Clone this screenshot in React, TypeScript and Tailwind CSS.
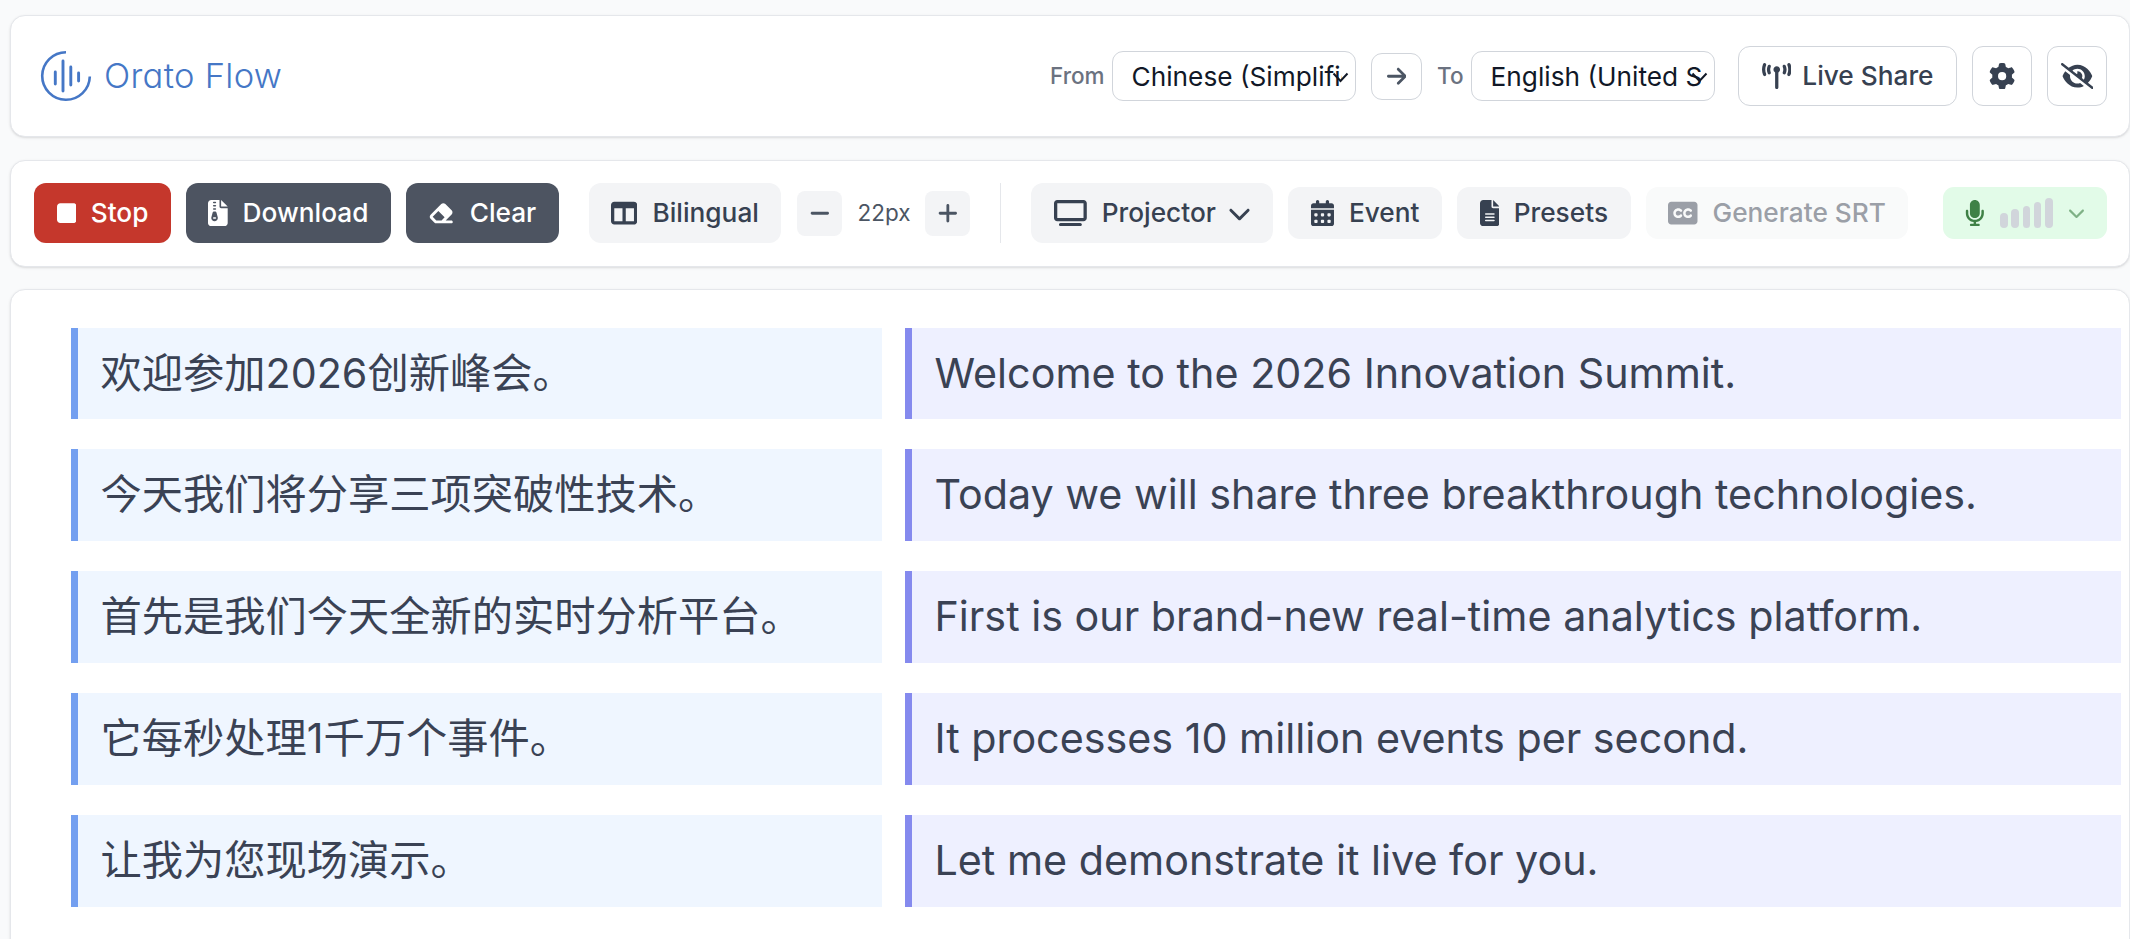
import { ReactNode } from 'react';
import {
  FaArrowRight,
  FaCalendarDays,
  FaChevronDown,
  FaClosedCaptioning,
  FaEraser,
  FaEyeSlash,
  FaFileLines,
  FaFileZipper,
  FaGear,
  FaMicrophone,
  FaMinus,
  FaPlus,
  FaStop,
  FaTableColumns,
  FaTowerBroadcast,
  FaTv,
} from 'react-icons/fa6';
import clsx from 'clsx';

const segments = [
  { source: '欢迎参加2026创新峰会。', target: 'Welcome to the 2026 Innovation Summit.' },
  { source: '今天我们将分享三项突破性技术。', target: 'Today we will share three breakthrough technologies.' },
  { source: '首先是我们今天全新的实时分析平台。', target: 'First is our brand-new real-time analytics platform.' },
  { source: '它每秒处理1千万个事件。', target: 'It processes 10 million events per second.' },
  { source: '让我为您现场演示。', target: 'Let me demonstrate it live for you.' },
];

const levelBars = ['h-[15px]', 'h-[19px]', 'h-[22px]', 'h-[26px]', 'h-[30px]'];

function Logo() {
  return (
    <div className="flex items-center text-[#4577c6]">
      <svg width="52" height="52" viewBox="0 0 52 52" fill="none" stroke="currentColor" strokeWidth="2.6">
        <path d="M26 2.2A23.8 23.8 0 1 0 49.8 26.5" />
        <path d="M15.3 22v12M23 11v30M30.8 17v18M38.6 23v8" strokeLinecap="round" strokeWidth="2.9" />
      </svg>
      <span className="ml-3 text-[34.5px] leading-none font-light tracking-[0.3px] whitespace-nowrap [font-feature-settings:'cv11','ss03']">
        Orato Flow
      </span>
    </div>
  );
}

function LanguageSelect({ value }: { value: string }) {
  return (
    <button className="relative flex h-[50px] w-[244px] items-center rounded-[11px] border border-[#d1d5db] bg-white pt-px pr-[13px] pl-[18.5px] text-[26.25px] text-[#111827]">
      <span className="overflow-hidden whitespace-nowrap">{value}</span>
      <svg className="absolute top-[20px] right-[6px]" width="17" height="12" viewBox="0 0 17 12" fill="none" stroke="currentColor" strokeWidth="2">
        <path d="M1.5 1.5L8.5 9L15.5 1.5" />
      </svg>
    </button>
  );
}

function ToolButton({ icon, label, className, children }: { icon: ReactNode; label: string; className: string; children?: ReactNode }) {
  return (
    <button
      className={clsx(
        'flex shrink-0 items-center rounded-[12px] px-[22.5px] text-[26.25px] font-medium whitespace-nowrap',
        className
      )}
    >
      {icon}
      <span>{label}</span>
      {children}
    </button>
  );
}

function Header() {
  return (
    <header className="flex h-[122px] items-center justify-between rounded-[15px] border border-[#e5e7eb] bg-white pr-[22px] pl-[29px] shadow-sm">
      <Logo />
      <div className="flex items-center">
        <span className="mr-[7.5px] text-[22.5px] font-medium text-[#6b7280]">From</span>
        <LanguageSelect value="Chinese (Simplified)" />
        <button className="mx-[15px] flex h-[47px] w-[51px] items-center justify-center rounded-[11px] border border-[#d1d5db] text-[#4b5563]">
          <FaArrowRight className="h-[22.5px] w-[19.7px]" />
        </button>
        <span className="mr-[7.5px] text-[22.5px] font-medium text-[#6b7280]">To</span>
        <LanguageSelect value="English (United States)" />
        <div className="ml-[23px] flex items-center gap-[15px] text-[#374151]">
          <ToolButton
            icon={<FaTowerBroadcast className="h-[26.25px] w-[29.5px] shrink-0" />}
            label="Live Share"
            className="h-[60px] gap-[11.25px] border border-[#d1d5db]"
          />
          <button className="flex size-[60px] items-center justify-center rounded-[11px] border border-[#d1d5db]">
            <FaGear className="size-[26.25px]" />
          </button>
          <button className="flex size-[60px] items-center justify-center rounded-[11px] border border-[#d1d5db]">
            <FaEyeSlash className="h-[26.25px] w-[32.8px] shrink-0" />
          </button>
        </div>
      </div>
    </header>
  );
}

function MicLevel() {
  return (
    <button className="ml-auto flex h-[52px] items-center gap-[15px] rounded-[11px] bg-[#e2fbe8] px-[22.5px] text-[#3f8146]">
      <FaMicrophone className="h-[26.25px] w-[19.7px] shrink-0" />
      <span className="flex h-[30px] items-end gap-[3.75px]">
        {levelBars.map(height => (
          <span key={height} className={clsx('w-[7.5px] rounded-full bg-[#d1d5db]', height)} />
        ))}
      </span>
      <FaChevronDown className="h-[19.5px] w-[17px] shrink-0 opacity-60" />
    </button>
  );
}

function Toolbar() {
  return (
    <div className="flex h-[107px] items-center rounded-[15px] border border-[#e5e7eb] bg-white pr-[22px] pb-px pl-[23px] shadow-sm">
      <div className="flex gap-[15px] text-white">
        <ToolButton
          icon={<FaStop className="h-[26.25px] w-[19.7px] shrink-0" />}
          label="Stop"
          className="h-[60px] gap-[14.5px] bg-[#c5372c]"
        />
        <ToolButton
          icon={<FaFileZipper className="h-[26.25px] w-[19.7px] shrink-0" />}
          label="Download"
          className="h-[60px] gap-[14.5px] bg-[#4d5461]"
        />
        <ToolButton
          icon={<FaEraser className="h-[26.25px] w-[26.25px] shrink-0" />}
          label="Clear"
          className="h-[60px] gap-[15px] bg-[#4d5461]"
        />
      </div>

      <div className="ml-[30px] flex items-center text-[#374151]">
        <ToolButton
          icon={<FaTableColumns className="size-[26.25px] shrink-0" />}
          label="Bilingual"
          className="h-[60px] gap-[15px] bg-[#f3f4f6]"
        />
        <div className="ml-[16px] flex items-center text-[#4b5563]">
          <button className="flex size-[45px] items-center justify-center rounded-[8px] bg-[#f3f4f6]">
            <FaMinus className="h-[22.5px] w-[19.7px]" />
          </button>
          <span className="w-[83px] text-center text-[22.5px]">22px</span>
          <button className="flex size-[45px] items-center justify-center rounded-[8px] bg-[#f3f4f6]">
            <FaPlus className="h-[22.5px] w-[19.7px]" />
          </button>
        </div>
      </div>

      <div className="mx-[30px] h-[60px] w-px bg-[#e5e7eb]" />

      <div className="flex items-center gap-[15px] text-[#374151]">
        <ToolButton
          icon={<FaTv className="h-[26.25px] w-[32.8px] shrink-0" />}
          label="Projector"
          className="h-[60px] gap-[15px] bg-[#f3f4f6]"
        >
          <FaChevronDown className="-ml-[3px] h-[26.25px] w-[23px] shrink-0" />
        </ToolButton>
        <ToolButton
          icon={<FaCalendarDays className="h-[26.25px] w-[23px] shrink-0" />}
          label="Event"
          className="h-[52px] gap-[15px] bg-[#f3f4f6]"
        />
        <ToolButton
          icon={<FaFileLines className="h-[26.25px] w-[19.7px] shrink-0" />}
          label="Presets"
          className="h-[52px] gap-[14.5px] bg-[#f3f4f6]"
        />
        <ToolButton
          icon={<FaClosedCaptioning className="h-[26.25px] w-[29.5px] shrink-0" />}
          label="Generate SRT"
          className="h-[52px] gap-[15px] bg-[#f9fafa] text-[#9b9fa7]"
        />
      </div>

      <MicLevel />
    </div>
  );
}

export default function App() {
  return (
    <div className="flex h-[939px] flex-col overflow-hidden bg-[#f9fafb] pt-[15px] pl-[10px] font-['Inter','Noto_Sans_CJK_SC',sans-serif]">
      <Header />
      <div className="mt-[23px]">
        <Toolbar />
      </div>
      <main className="mt-[22px] -mb-5 flex-1 rounded-[15px] border border-[#e5e7eb] bg-white pt-[37.6px] pr-[8px] pl-[60px] shadow-sm">
        <div className="flex flex-col gap-[30px]">
          {segments.map(segment => (
            <div
              key={segment.target}
              className="grid h-[91.85px] grid-cols-[811px_1fr] gap-[23px] text-[41.25px] leading-[91px] whitespace-nowrap text-[#3a4254]"
            >
              <p className="border-l-7 border-[#739ff0] bg-[#eff6ff] pl-[22.5px]">{segment.source}</p>
              <p className="border-l-7 border-[#858aee] bg-[#eef0ff] pl-[22.5px]">{segment.target}</p>
            </div>
          ))}
        </div>
      </main>
    </div>
  );
}
